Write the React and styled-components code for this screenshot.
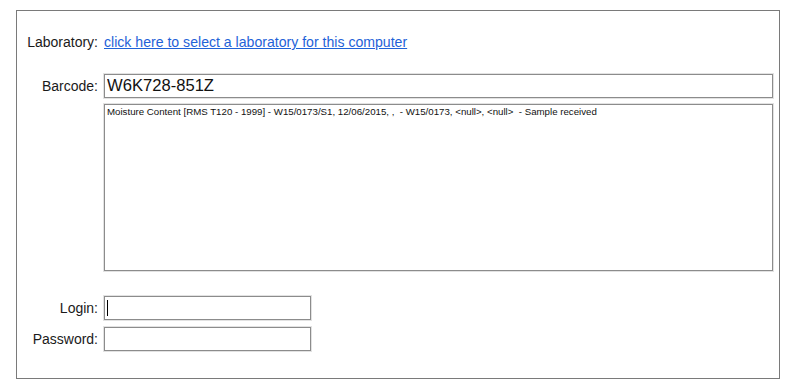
import styled, { createGlobalStyle } from 'styled-components'

const GlobalStyle = createGlobalStyle`
  body {
    margin: 0;
    background: #ffffff;
    font-family: "Liberation Sans", Arial, sans-serif;
    color: #1a1a1a;
  }
`

const Panel = styled.div`
  box-sizing: border-box;
  width: 764px;
  height: 369px;
  margin: 10px 0 0 16px;
  border: 1px solid #7a7a7a;
  padding: 23px 6px 0 0;
`

const Row = styled.div`
  display: flex;
  align-items: ${p => (p.$top ? 'flex-start' : 'center')};
  gap: 6px;
  margin-top: ${p => p.$mt || 0}px;
`

const Label = styled.label`
  width: 81px;
  flex: none;
  text-align: right;
  font-size: 14px;
  line-height: 16px;
`

const Link = styled.a`
  font-size: 14.1px;
  line-height: 16px;
  color: #1f62d8;
  text-decoration: underline;
  cursor: pointer;
`

const TextInput = styled.input`
  box-sizing: border-box;
  width: ${p => p.$w}px;
  height: 24px;
  margin: 0;
  padding: 0 2px;
  border: 1px solid #8c8c8c;
  box-shadow: 0 0 0 1px #e2e2e2;
  font-family: "Liberation Sans", Arial, sans-serif;
  font-size: ${p => p.$fs || 14}px;
  color: #111;
  outline: none;
`

const CaretWrap = styled.div`
  position: relative;
  &::after {
    content: '';
    position: absolute;
    left: 3px;
    top: 4px;
    width: 1px;
    height: 16px;
    background: #000;
  }
`

const Details = styled.textarea`
  box-sizing: border-box;
  width: 669px;
  height: 167px;
  margin: 0 0 0 87px;
  padding: 1px 2px;
  border: 1px solid #8c8c8c;
  box-shadow: 0 0 0 1px #e2e2e2;
  font-family: "Liberation Sans", Arial, sans-serif;
  font-size: 9.7px;
  line-height: 12px;
  color: #111;
  resize: none;
  outline: none;
`

export default function App() {
  return (
    <>
      <GlobalStyle />
      <Panel>
        <Row>
          <Label>Laboratory:</Label>
          <Link>click here to select a laboratory for this computer</Link>
        </Row>
        <Row $mt={24}>
          <Label>Barcode:</Label>
          <TextInput $w={669} $fs={16.6} defaultValue="W6K728-851Z" />
        </Row>
        <Row $mt={6} $top>
          <Details
            readOnly
            defaultValue="Moisture Content [RMS T120 - 1999] - W15/0173/S1, 12/06/2015, ,  - W15/0173, <null>, <null>  - Sample received"
          />
        </Row>
        <Row $mt={25}>
          <Label>Login:</Label>
          <CaretWrap>
            <TextInput $w={207} />
          </CaretWrap>
        </Row>
        <Row $mt={7}>
          <Label>Password:</Label>
          <TextInput $w={207} type="password" />
        </Row>
      </Panel>
    </>
  )
}
